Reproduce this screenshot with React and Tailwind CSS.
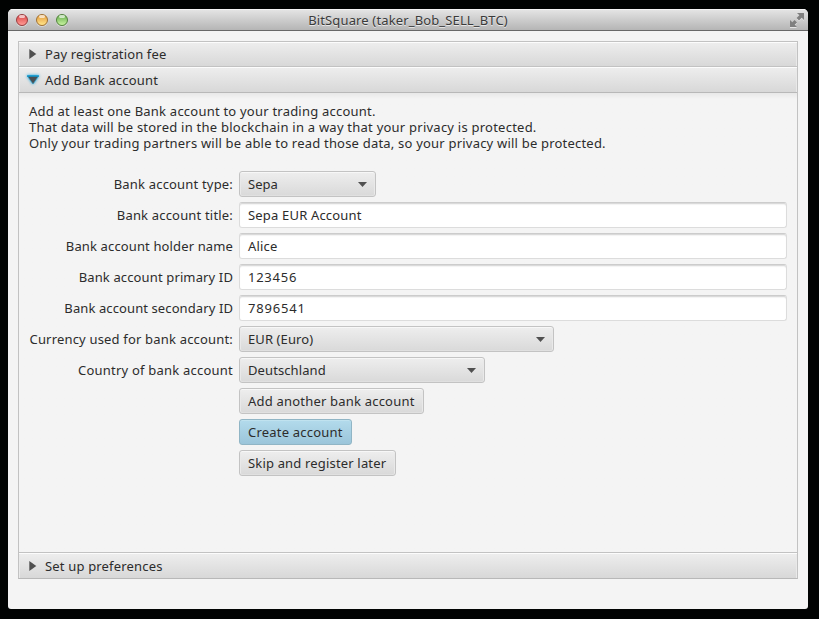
import React from "react";

const surface =
  "border border-[#c3c3c3] bg-linear-to-b from-[#eeeeee] to-[#d9d9d9] shadow-[inset_0_1px_0_#f7f7f7,inset_1px_0_0_#e9e9e9,inset_-1px_0_0_#e9e9e9,inset_0_-1px_0_#e0e0e0]";

function TrafficLight({ className }) {
  return (
    <span className={"relative block size-3 rounded-full border shadow-[0_1px_0_#eeeeee88] " + className}>
      <span className="absolute left-[2px] top-0 h-[3px] w-[6px] rounded-full bg-white/65" />
    </span>
  );
}

function Header({ label, open, className = "", textClass = "" }) {
  return (
    <div
      className={
        "flex shrink-0 items-center bg-linear-to-b from-[#eeeeee] to-[#d8d8d8] pl-[10px] shadow-[inset_0_1px_0_#fcfcfc,inset_-1px_0_0_#e9e9e9,inset_1px_0_0_#e9e9e9] " +
        className
      }
    >
      {open ? (
        <svg width="16" height="14" viewBox="0 0 16 14" className="-ml-1 mr-1 shrink-0 drop-shadow-[0_0_1.5px_#10a5e0]">
          <path d="M2.500 3h11L8 11z" fill="#4b4f52" stroke="#2a93be" strokeWidth="0.6" />
          <path d="M2 3h12" stroke="#0d98cf" strokeWidth="1.4" />
        </svg>
      ) : (
        <svg width="8" height="10" viewBox="0 0 8 10" className="mr-2 shrink-0">
          <path d="M0.300 0l7 5-7 5z" fill="#505050" />
        </svg>
      )}
      <span className={textClass}>{label}</span>
    </div>
  );
}

function Row({ label, labelClass = "", children }) {
  return (
    <div className="flex h-[26px] items-center gap-[6px]">
      <span className={"flex w-[204px] shrink-0 justify-end " + labelClass}>
        <span>{label}</span>
      </span>
      {children}
    </div>
  );
}

function Combo({ label, className }) {
  return (
    <div className={"flex h-[26px] items-center justify-between rounded-[3px] px-2 " + surface + " " + className}>
      <span>{label}</span>
      <svg width="9" height="5" viewBox="0 0 9 5">
        <path d="M0 0h9L4.500 5z" fill="#505050" />
      </svg>
    </div>
  );
}

function Field({ value, className = "" }) {
  return (
    <div className="flex h-[26px] w-[548px] items-center rounded-[3px] border border-[#dcdcdc] border-t-[#cccccc] bg-white pl-2 shadow-[inset_0_1px_0_#dadada,inset_0_2px_1px_#f3f3f3]">
      <span className={className}>{value}</span>
    </div>
  );
}

function Button({ label, className }) {
  return (
    <button type="button" className={"flex h-[26px] items-center rounded-[3px] pl-2 text-left " + className}>
      <span>{label}</span>
    </button>
  );
}

export default function App() {
  return (
    <div className="h-[619px] w-[819px] overflow-hidden bg-[#010302] px-2 pt-[9px] font-['Noto_Sans',sans-serif] text-[13px] leading-4 whitespace-nowrap text-[#2c2c2c]">
      <div className="flex h-[600px] w-[800px] flex-col overflow-hidden rounded-t-[5px] rounded-b-[3px] bg-[#f4f4f4]">
        <div className="flex h-[22px] shrink-0 items-center border-b border-[#686868] bg-linear-to-b from-[#e6e6e6] to-[#b5b5b5] pl-2 pr-[3px] shadow-[inset_0_1px_0_#f5f5f5]">
          <div className="flex w-[60px] gap-2">
            <TrafficLight className="border-[#973a3c] bg-linear-to-b from-[#d83f45] to-[#ff9b95]" />
            <TrafficLight className="border-[#a06f30] bg-linear-to-b from-[#e39a37] to-[#ffe58a]" />
            <TrafficLight className="border-[#50803b] bg-linear-to-b from-[#65ae4d] to-[#c8f3a0]" />
          </div>
          <div className="flex grow justify-center pr-[5px] tracking-[0.14px] text-[#3a3a3a] [text-shadow:0_1px_0_#e8e8e8]">
            <span>BitSquare (taker_Bob_SELL_BTC)</span>
          </div>
          <div className="flex w-[60px] justify-end">
            <svg width="16" height="16" viewBox="0 0 16 16" fill="#808080" className="drop-shadow-[0_1px_0_#e4e4e4]">
              <path d="M8 1h7v7l-2.300-2.300-2.700 2.700L7.600 6l2.700-2.700z" />
              <path d="M1 8v7h7l-2.300-2.300 2.300-2.300L5.600 8l-2.300 2.300z" />
            </svg>
          </div>
        </div>

        <div className="mx-[10px] mt-[10px] flex h-[538px] flex-col border border-[#c2c2c2] border-b-[#b8b8b8]">
          <Header label="Pay registration fee" className="h-[25px] border-b border-[#c2c2c2]" textClass="tracking-[0.13px]" />
          <Header label="Add Bank account" open className="h-[26px] border-b border-[#b8b8b8]" textClass="tracking-[0.18px]" />
          <div className="grow bg-linear-to-b from-[#e8e8e8] to-[#f4f4f4] to-[6px] pl-[10px] pt-[10px]">
            <p className="tracking-[0.22px]">Add at least one Bank account to your trading account.</p>
            <p className="tracking-[0.235px]">That data will be stored in the blockchain in a way that your privacy is protected.</p>
            <p className="tracking-[0.205px]">Only your trading partners will be able to read those data, so your privacy will be protected.</p>
            <div className="mt-5 flex flex-col gap-[5px] tracking-[0.18px]">
              <Row label="Bank account type:">
                <Combo label="Sepa" className="w-[137px] tracking-normal" />
              </Row>
              <Row label="Bank account title:">
                <Field value="Sepa EUR Account" />
              </Row>
              <Row label="Bank account holder name" labelClass="tracking-[0.13px]">
                <Field value="Alice" />
              </Row>
              <Row label="Bank account primary ID" labelClass="tracking-[0.13px]">
                <Field value="123456" className="tracking-[0.75px]" />
              </Row>
              <Row label="Bank account secondary ID" labelClass="tracking-[0.1px]">
                <Field value="7896541" className="tracking-[0.8px]" />
              </Row>
              <Row label="Currency used for bank account:">
                <Combo label="EUR (Euro)" className="w-[315px] tracking-[0.1px]" />
              </Row>
              <Row label="Country of bank account" labelClass="tracking-[0.22px]">
                <Combo label="Deutschland" className="w-[246px] tracking-[0.1px]" />
              </Row>
              <Row>
                <Button label="Add another bank account" className={"w-[185px] tracking-[0.2px] " + surface} />
              </Row>
              <Row>
                <Button
                  label="Create account"
                  className="w-[113px] border border-[#90b5c5] bg-linear-to-b from-[#b3dbec] to-[#9bc5da] tracking-[0.2px] shadow-[inset_0_1px_0_#c0e2ef]"
                />
              </Row>
              <Row>
                <Button label="Skip and register later" className={"w-[157px] tracking-[0.17px] " + surface} />
              </Row>
            </div>
          </div>
          <Header label="Set up preferences" className="h-[26px] border-t border-[#c2c2c2]" textClass="tracking-[0.17px]" />
        </div>
      </div>
    </div>
  );
}
